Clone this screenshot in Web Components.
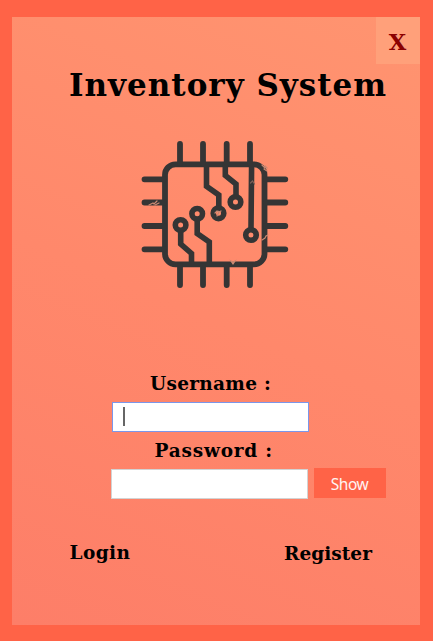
<!DOCTYPE html>
<html lang="en"><head><meta charset="utf-8"><title>Inventory System</title>
<style>
html,body{margin:0;height:641px;overflow:hidden}
body{background:#ff6347}
</style></head><body><login-window></login-window>
<script>
const define = (name, html) => customElements.define(name, class extends HTMLElement {
  constructor() {
    super();
    this.attachShadow({ mode: 'open' }).innerHTML = html;
  }
});

define('serif-text', `<style>
:host{display:block;white-space:nowrap;color:#000;font:bold 18.5px/24px "DejaVu Serif",serif}
</style><slot></slot>`);

define('close-button', `<style>
:host{display:flex;width:44px;height:47px;background:#ffa07a;align-items:center;justify-content:center}
serif-text{color:#8b0000;font-size:22.5px;line-height:30px;padding:3px 1px 0 0}
</style><serif-text><slot></slot></serif-text>`);

define('text-box', `<style>
:host{display:flex;box-sizing:border-box;width:197px;height:30px;background:#fff;border:1px solid #d3d3d3;padding:4px 10px}
:host([focused]){border-color:#7b96ea}
i{display:none;width:2px;height:19px;background:#666}
:host([focused]) i{display:block}
</style><i></i>`);

define('show-button', `<style>
:host{display:flex;width:72px;height:30px;background:#ff6347;color:#fff4f1;align-items:center;justify-content:center;font:15.5px/20px "Noto Sans","Open Sans",sans-serif}
span{padding:1px 1px 0 0;letter-spacing:-.5px}
</style><span><slot></slot></span>`);

define('chip-icon', `<style>
:host{display:block;width:148px;height:148px}
svg{display:block}
</style><svg width="148" height="148" viewBox="141 140 148 148" fill="none" stroke="#353535" stroke-width="5.8" stroke-linecap="round">
<rect x="165" y="164.3" width="99.5" height="100" rx="10.5"/>
<path d="M180 144V163M203 144V163M226.7 144V163M250 144V163M180 266V285M203 266V285M226.7 266V285M250 266V285" />
<path d="M144.500 179.300H164M144.500 202.500H164M144.500 226H164M144.500 249.300H164M266 179.300H285.300M266 202.500H285.300M266 226H285.300M266 249.300H285.300"/>
<g stroke-linecap="butt" stroke-width="5.600"><path d="M206.500 165V186.300L218.800 195V207M225.300 165V175.500L236 184V196M251.600 165L251 229M197.200 219V233.500L209.300 242V264M180.700 231V244L191.500 253.500V264"/>
<circle cx="218.500" cy="213.300" r="5.300"/><circle cx="235.500" cy="202" r="5.300"/><circle cx="251" cy="235" r="5.300"/><circle cx="197.200" cy="213.800" r="5.300"/><circle cx="180.600" cy="225" r="5.300"/></g>
<g stroke="#c98872" stroke-width="1.200"><path d="M149 205l4-2 1 1 3-3M155 205l4-2M262 165l3 3m0-2l2 2m-3 1l3 2M262 240l3-2 1-2 2-1"/><path d="M250.500 183l2-2 2 3" stroke="#7d6158"/><path d="M215 213l2-2 2 1-2 4M219 212l2-1"/><path d="M231 261l2 1 2-1-2 3z" fill="#dc8b72"/></g>
</svg>`);

define('login-window', `<style>
:host{display:block;box-sizing:border-box;width:433px;height:641px;padding:17px 13px 16px 12px;background:#ff6347}
main{display:flex;flex-direction:column;height:608px;background:linear-gradient(23deg,#fd7e68 0%,#ff886b 50%,#ff9470 100%)}
close-button{align-self:flex-end}
.title{font-size:31px;line-height:40px;height:40px;margin:1px 0 0 57px;letter-spacing:1px}
chip-icon{margin:35px 0 0 129px}
.user{margin:84px 0 0 138px;letter-spacing:.3px}
.userbox{margin:6px 0 0 100px}
.pass{margin:7px 0 0 142.5px;letter-spacing:.8px}
.row{display:flex;align-items:flex-start;gap:6px;margin:5px 0 0 99px}
.row text-box{margin-top:1px}
nav{display:flex;justify-content:space-between;margin:42px 48px 0 57.5px}
nav serif-text{letter-spacing:.4px}
nav .reg{margin-top:1px;letter-spacing:.05px}
</style><main>
<close-button>X</close-button>
<serif-text class="title">Inventory System</serif-text>
<chip-icon></chip-icon>
<serif-text class="user">Username :</serif-text>
<text-box class="userbox" focused></text-box>
<serif-text class="pass">Password :</serif-text>
<div class="row"><text-box></text-box><show-button>Show</show-button></div>
<nav><serif-text>Login</serif-text><serif-text class="reg">Register</serif-text></nav>
</main>`);
</script></body></html>
